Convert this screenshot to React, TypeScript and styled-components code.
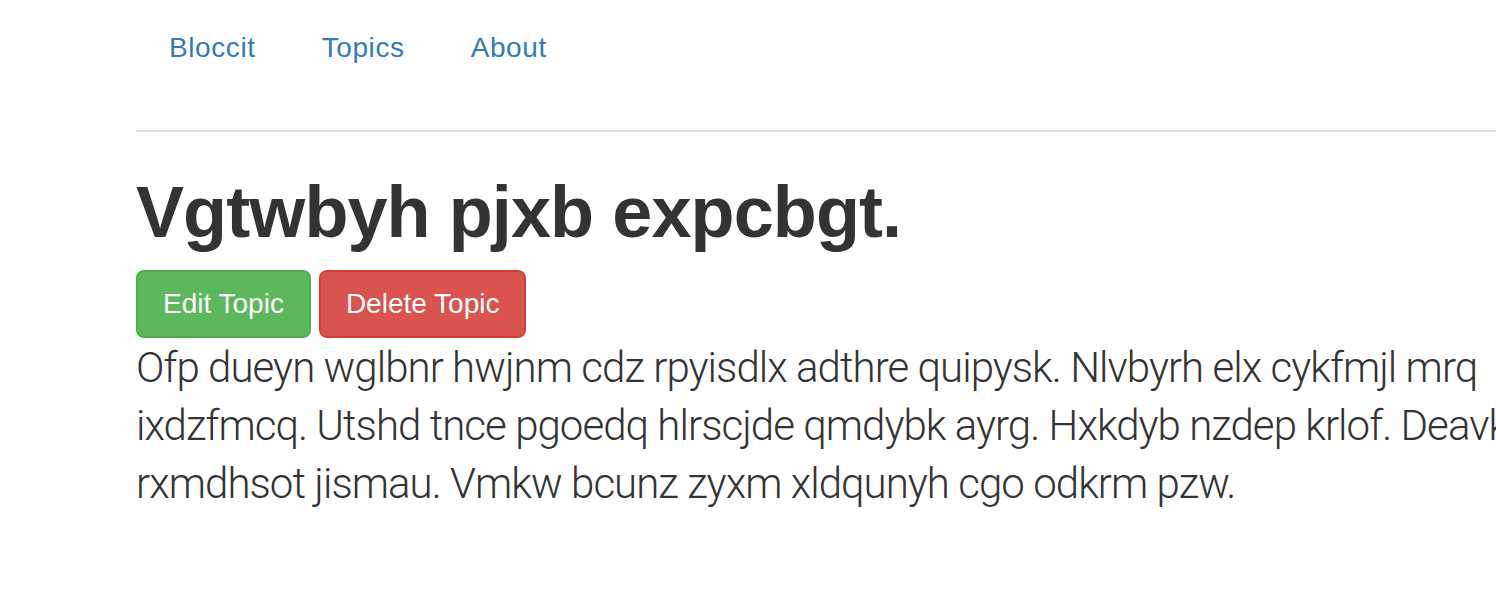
import React from "react";
import styled, { createGlobalStyle } from "styled-components";

const Global = createGlobalStyle`
  html, body {
    margin: 0;
    padding: 0;
    background: #fff;
    overflow: hidden;
  }
  body {
    font-family: "Liberation Sans", Arial, sans-serif;
    color: #333;
  }
`;

const Page = styled.div`
  width: 100%;
  height: 592px;
  overflow: hidden;
`;

const Container = styled.div`
  margin-left: 136px;
  width: 1440px;
`;

const Header = styled.nav`
  padding: 28px 0 62px;
  border-bottom: 2px solid #dddddd;
`;

const NavList = styled.ul`
  display: flex;
  list-style: none;
  margin: 0;
  padding: 0;
`;

const NavLink = styled.a`
  display: block;
  padding: 0 33px;
  font-size: 28px;
  line-height: 40px;
  color: #337ab7;
  text-decoration: none;
  letter-spacing: 0.6px;
`;

const Title = styled.h1`
  margin: 41px 0 0;
  font-size: 72px;
  line-height: 79px;
  font-weight: 700;
  color: #333;
  letter-spacing: -0.9px;
`;

const Actions = styled.div`
  display: flex;
  gap: 8px;
  margin-top: 18px;
`;

const Button = styled.a<{ $variant: "success" | "danger" }>`
  display: inline-block;
  padding: 12px 25px;
  font-size: 28px;
  line-height: 40px;
  border-radius: 8px;
  border: 2px solid ${(p) => (p.$variant === "success" ? "#4cae4c" : "#d43f3a")};
  background: ${(p) => (p.$variant === "success" ? "#5cb85c" : "#d9534f")};
  color: #fff;
  text-decoration: none;
  letter-spacing: 0;
`;

const Lead = styled.p`
  margin: 1px 0 0;
  font-family: Roboto, "Liberation Sans", sans-serif;
  font-weight: 300;
  font-size: 42px;
  line-height: 58px;
  color: #333;
  letter-spacing: -0.95px;
`;

export default function App() {
  return (
    <Page>
      <Global />
      <Container>
        <Header>
          <NavList>
            <li><NavLink href="#">Bloccit</NavLink></li>
            <li><NavLink href="#">Topics</NavLink></li>
            <li><NavLink href="#">About</NavLink></li>
          </NavList>
        </Header>
        <Title>Vgtwbyh pjxb expcbgt.</Title>
        <Actions>
          <Button $variant="success" href="#">Edit Topic</Button>
          <Button $variant="danger" href="#">Delete Topic</Button>
        </Actions>
        <Lead>
          Ofp dueyn wglbnr hwjnm cdz rpyisdlx adthre quipysk. Nlvbyrh elx cykfmjl mrq
          ixdzfmcq. Utshd tnce pgoedq hlrscjde qmdybk ayrg. Hxkdyb nzdep krlof. Deavkyt
          rxmdhsot jismau. Vmkw bcunz zyxm xldqunyh cgo odkrm pzw.
        </Lead>
      </Container>
    </Page>
  );
}
